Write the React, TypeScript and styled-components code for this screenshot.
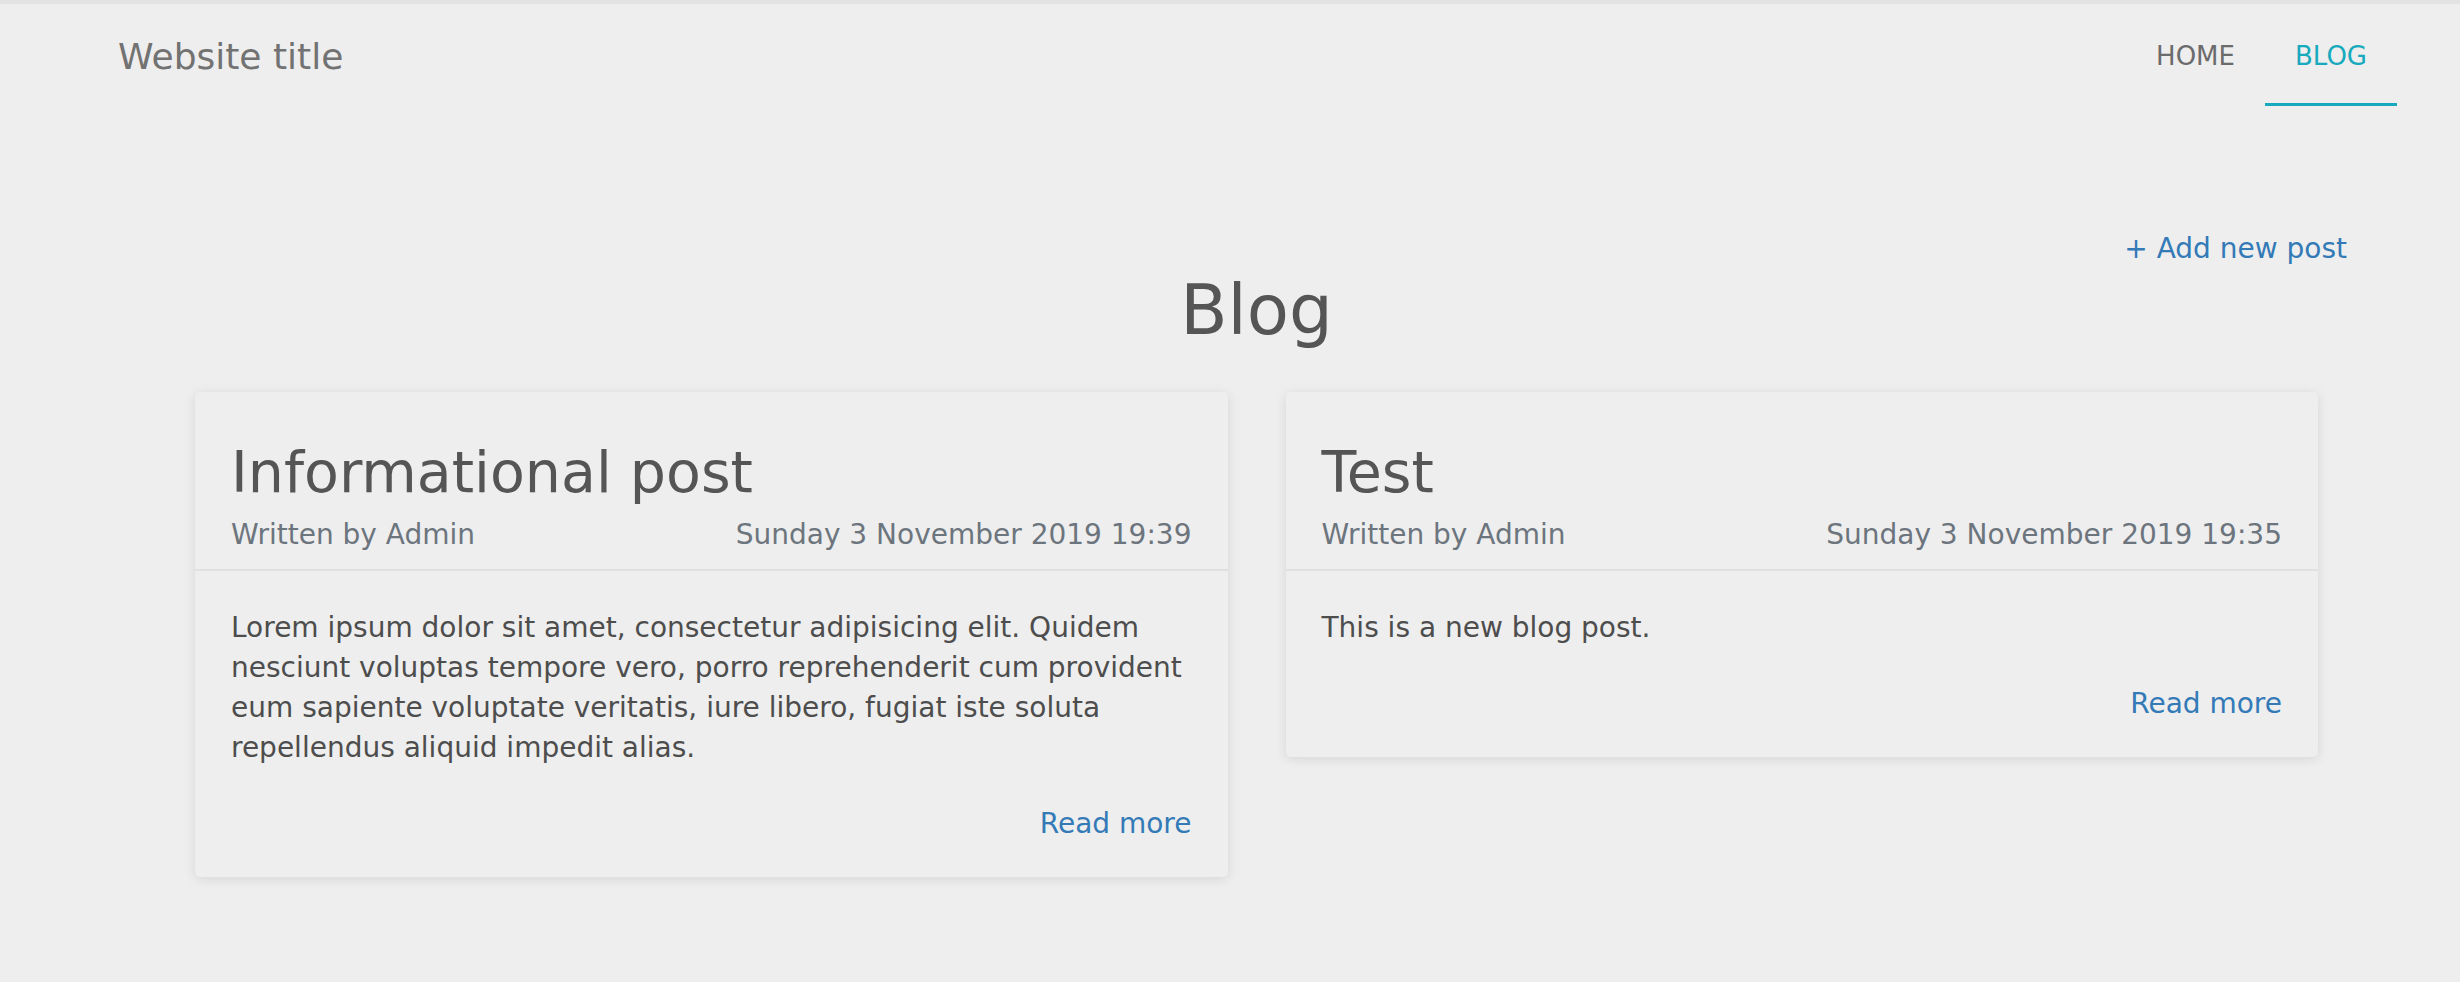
import styled, { createGlobalStyle } from "styled-components";

const GlobalStyle = createGlobalStyle`
  html, body {
    margin: 0;
    padding: 0;
    background: #eeeeee;
    font-family: "DejaVu Sans", Verdana, sans-serif;
  }
  * {
    box-sizing: border-box;
  }
`;

const Page = styled.div`
  min-height: 982px;
  border-top: 4px solid #e3e3e3;
`;

const NavBar = styled.nav`
  display: flex;
  align-items: flex-start;
  justify-content: space-between;
  padding: 0 63px 0 118px;
`;

const Brand = styled.a`
  padding-top: 28px;
  font-size: 36px;
  line-height: 50px;
  color: #727272;
  text-decoration: none;
`;

const NavList = styled.div`
  display: flex;
`;

const NavLink = styled.a<{ $active?: boolean }>`
  display: block;
  padding: 32px 30px 27px;
  font-size: 26px;
  line-height: 40px;
  text-transform: uppercase;
  text-decoration: none;
  color: ${(p) => (p.$active ? "#17a9bd" : "#6b6b6b")};
  border-bottom: 3px solid ${(p) => (p.$active ? "#17a9bd" : "transparent")};
`;

const Main = styled.main`
  padding: 123px 113px 0 166px;
`;

const Toolbar = styled.div`
  display: flex;
  justify-content: flex-end;
`;

const AddLink = styled.a`
  font-size: 28px;
  line-height: 40px;
  color: #337ab7;
  text-decoration: none;
`;

const Heading = styled.h1`
  margin: 1px 0 0;
  text-align: center;
  font-size: 69px;
  line-height: 80px;
  font-weight: normal;
  color: #555555;
`;

const Row = styled.div`
  display: flex;
  align-items: flex-start;
  margin-top: 42px;
`;

const Column = styled.div`
  flex: 1;
  padding: 0 29px;
`;

const Card = styled.article`
  background: #eeeeee;
  border-radius: 5px;
  box-shadow: 0 2px 12px rgba(0, 0, 0, 0.1);
`;

const CardHeader = styled.header`
  padding: 46px 36px 14px;
  border-bottom: 2px solid #e0e0e0;
`;

const Title = styled.h2`
  margin: 0 0 9px;
  font-size: 57px;
  line-height: 68px;
  font-weight: normal;
  color: #555555;
`;

const Meta = styled.div`
  display: flex;
  justify-content: space-between;
  font-size: 28px;
  line-height: 40px;
  color: #6c757d;
`;

const CardBody = styled.div`
  padding: 37px 36px 33px;
`;

const Text = styled.p`
  margin: 0 0 36px;
  font-size: 28px;
  line-height: 40px;
  color: #4d4d4d;
`;

const ReadMore = styled.a`
  display: block;
  text-align: right;
  font-size: 28px;
  line-height: 40px;
  color: #337ab7;
  text-decoration: none;
`;

const posts = [
  {
    title: "Informational post",
    author: "Admin",
    date: "Sunday 3 November 2019 19:39",
    text: "Lorem ipsum dolor sit amet, consectetur adipisicing elit. Quidem nesciunt voluptas tempore vero, porro reprehenderit cum provident eum sapiente voluptate veritatis, iure libero, fugiat iste soluta repellendus aliquid impedit alias.",
  },
  {
    title: "Test",
    author: "Admin",
    date: "Sunday 3 November 2019 19:35",
    text: "This is a new blog post.",
  },
];

const App = () => {
  return (
    <Page>
      <GlobalStyle />
      <NavBar>
        <Brand href="#">Website title</Brand>
        <NavList>
          <NavLink href="#">Home</NavLink>
          <NavLink href="#" $active>
            Blog
          </NavLink>
        </NavList>
      </NavBar>
      <Main>
        <Toolbar>
          <AddLink href="#">+ Add new post</AddLink>
        </Toolbar>
        <Heading>Blog</Heading>
        <Row>
          {posts.map((post) => (
            <Column key={post.title}>
              <Card>
                <CardHeader>
                  <Title>{post.title}</Title>
                  <Meta>
                    <span>Written by {post.author}</span>
                    <span>{post.date}</span>
                  </Meta>
                </CardHeader>
                <CardBody>
                  <Text>{post.text}</Text>
                  <ReadMore href="#">Read more</ReadMore>
                </CardBody>
              </Card>
            </Column>
          ))}
        </Row>
      </Main>
    </Page>
  );
};

export default App;
